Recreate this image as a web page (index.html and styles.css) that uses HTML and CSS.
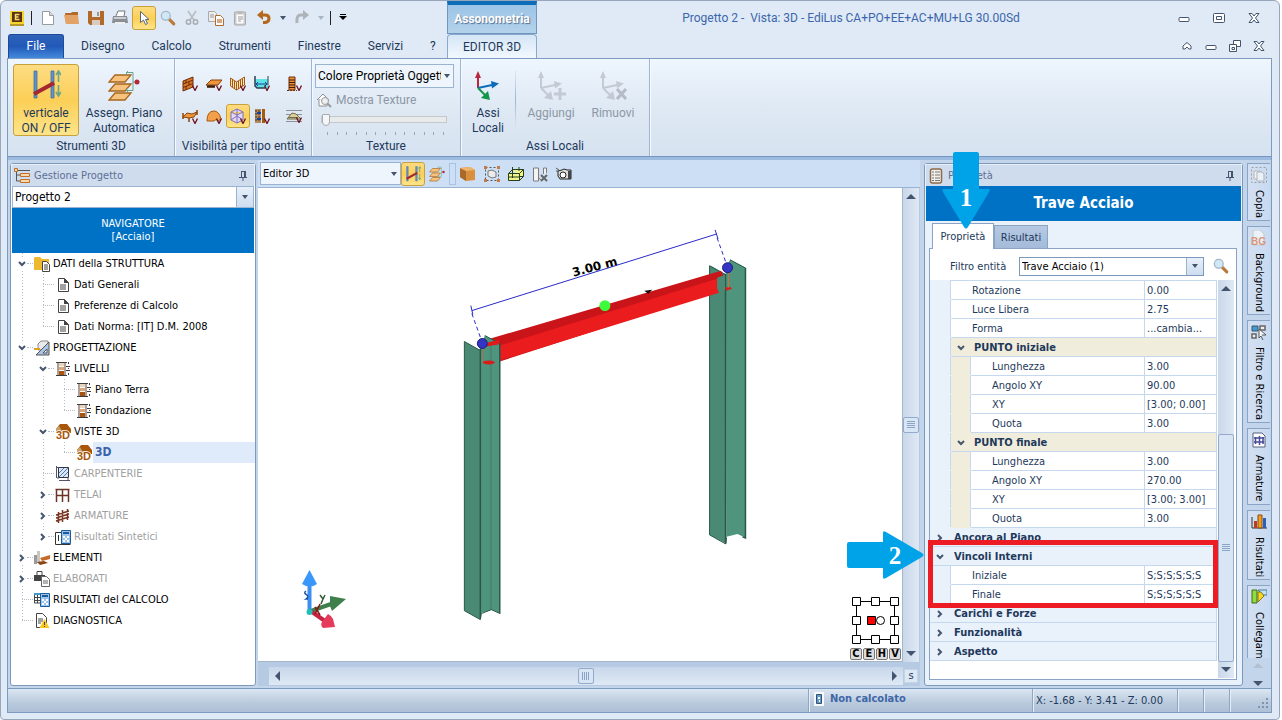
FILE: index.html
```html
<!DOCTYPE html>
<html lang="it">
<head>
  <meta charset="UTF-8">
  <title>Progetto 2 - Vista: 3D - EdiLus</title>
  <link rel="stylesheet" href="styles.css">
</head>
<body>

  <!-- shared icons -->
  <svg class="defs" aria-hidden="true">
    <symbol id="i-doc" viewBox="0 0 16 16"><path d="M3.500 1.500h6l4 4v9h-10z" fill="#fff" stroke="#444"/><path d="M9 1v5h5z" fill="#444"/><path d="M5 8h6M5 10h6M5 12h6" stroke="#444"/></symbol>
    <symbol id="i-down" viewBox="0 0 10 10"><path d="M2 3l3 3 3-3" fill="none" stroke="#45566f" stroke-width="2"/></symbol>
    <symbol id="i-right" viewBox="0 0 10 10"><path d="M3 2l3 3-3 3" fill="none" stroke="#45566f" stroke-width="2"/></symbol>
    <symbol id="i-pin" viewBox="0 0 10 12"><path d="M3 1.500h5M3.500 1v6M6.500 1v6M7.500 1v6M1 7.500h8M5 8v3" fill="none" stroke="#44546e"/></symbol>
    <symbol id="i-v" viewBox="0 0 6 6"><path d="M0.500 0.500l2.500 5 2.500-5" fill="none" stroke="#6d0f1c" stroke-width="1.300"/></symbol>
    <symbol id="i-min" viewBox="0 0 12 12"><rect x="1" y="5.500" width="10" height="4" rx="1" fill="#fff" stroke="#44546e"/></symbol>
    <symbol id="i-x" viewBox="0 0 12 12"><path d="M1 1.500h3l2 2.500 2-2.500h3l-3.500 4.500 3.500 4.500h-3l-2-2.500-2 2.500h-3l3.500-4.500z" fill="#fff" stroke="#44546e"/></symbol>
    <symbol id="i-lens" viewBox="0 0 18 18"><path d="M10.500 10.500l5 5" stroke="#b8793a" stroke-width="3.500" stroke-linecap="round"/><circle cx="6.500" cy="6.500" r="5" fill="#cfe8f8" stroke="#a9b8c6" stroke-width="1.500"/></symbol>
    <symbol id="i-levels" viewBox="0 0 16 16"><path d="M1 1.500h11M1 14.500h11" stroke="#3c3c3c"/><path d="M3 1v13M10 1v13" stroke="#5a4030"/><path d="M4 2h5v3H4z" fill="#e8d5c0"/><path d="M4 6h5v3H4z" fill="#d8a679"/><path d="M4 10h5v4H4z" fill="#a8540c"/><path d="M11 5.500h4M11 9.500h4M13.500 1v2M13.500 7v1M13.500 12v2" stroke="#3c3c3c"/></symbol>
    <symbol id="i-house" viewBox="0 0 16 16"><path d="M1 5l4-5h7l4 5v4H5z" fill="#a8560a"/><path d="M1 5l3-3 3 5v2H1z" fill="#c9a06c"/><text x="1" y="15" font-family="Liberation Sans" font-size="11" font-weight="bold" fill="#a8560a" stroke="#fff" stroke-width="1.500" paint-order="stroke">3D</text></symbol>
    <symbol id="i-planes" viewBox="0 0 32 30"><path d="M7 4h16l-6 7H1zM7 13h16l-6 7H1zM7 22h16l-6 7H1z" fill="#f6c27d" stroke="#a8661c" stroke-width="1.300"/><path d="M18 1.500h7v18h-7M25 11h4M20 0l-2 2 2 2M20 17l-2 2 2 2" fill="none" stroke="#63a58d"/><circle cx="29" cy="11" r="2.500" fill="#b4283c"/></symbol>
    <symbol id="i-vert" viewBox="0 0 30 30"><path d="M3 1h3v27H3zM20 1h3v27h-3z" fill="#5b93cf" stroke="#4d6f94" stroke-width="0.800"/><path d="M3 24L23 13" stroke="#a5272f" stroke-width="4"/><path d="M27.500 2v10M27.500 15v10M25 5l2.500-4L30 5M25 22l2.500 4 2.500-4" fill="none" stroke="#6aa58b" stroke-width="1.600"/></symbol>
    <symbol id="i-axes" viewBox="0 0 32 32"><path d="M6 5v13" stroke="var(--z)" stroke-width="2"/><path d="M3 8l3-7 3 7z" fill="var(--z)"/><path d="M6 18l14-3" stroke="var(--y)" stroke-width="2"/><path d="M19 11l8 2.500-7 5z" fill="var(--y)"/><path d="M6 18l8 8" stroke="var(--x)" stroke-width="2"/><path d="M16 21l2 9-9-2z" fill="var(--x)"/></symbol>
    <symbol id="i-calc" viewBox="0 0 16 16"><path d="M6.500 1.500h9v13h-9z" fill="#9cc4ec" stroke="#1d5c9c"/><path d="M8 3h6v2H8z" fill="#1d5c9c"/><path d="M8 7h2v2H8zM12 7h2v2h-2zM10 9h2v2h-2zM8 11h2v2H8zM12 11h2v2h-2z" fill="#fff"/></symbol>
  </svg>

  <div class="window">

    <header class="top">
      <div class="quick">
        <svg class="ic" viewBox="0 0 16 16"><path d="M1 1h14v13H1z" fill="#f3d52c"/><path d="M3 2h10v10H3z" fill="#5c3214"/><path d="M10.500 4.500h-4v5h4M6.500 7h3" fill="none" stroke="#f5d96b" stroke-width="1.500"/><path d="M1 14h14v2H1z" fill="#b8972a"/></svg>
        <span class="bar"></span>
        <button class="tool" title="Nuovo"><svg class="ic" viewBox="0 0 16 16"><path d="M2.500 1.500h7l4 4v9h-11z" fill="#fff" stroke="#9a9a9a"/><path d="M9.500 1.500v4h4" fill="#ddd" stroke="#9a9a9a"/></svg></button>
        <button class="tool" title="Apri"><svg class="ic" viewBox="0 0 16 16"><path d="M1 3h6l1-1h6v12H2z" fill="#b06a2b"/><path d="M0 5h14l1 9H2z" fill="#e3a266"/></svg></button>
        <button class="tool" title="Salva"><svg class="ic" viewBox="0 0 16 16"><path d="M0 1h16v14H2l-2-2z" fill="#b26a2a"/><path d="M4 1h8v6H4z" fill="#e4e6ea"/><path d="M4 10h8v5H4z" fill="#d9cbbd"/><path d="M9 2h2v4H9z" fill="#999"/></svg></button>
        <button class="tool" title="Stampa"><svg class="ic" viewBox="0 0 16 16"><path d="M4 6l2-5h7l-1 5" fill="#fff" stroke="#777"/><path d="M1 6h14l1 7H0z" fill="#8a8e94"/><path d="M2 7h12v2H2z" fill="#c9ccd0"/><path d="M3 12h10v2H3z" fill="#eee"/></svg></button>
        <button class="tool on" title="Seleziona"><svg class="ic" viewBox="0 0 16 16"><path d="M4.500 1.500v11l3-2.500 2 4.500 2-1-2-4h3.500z" fill="#fff" stroke="#56657f"/></svg></button>
        <button class="tool" title="Zoom"><svg class="ic"><use href="#i-lens"/></svg></button>
        <button class="tool" title="Taglia"><svg class="ic" viewBox="0 0 16 16"><path d="M4 1l6 9M12 1L6 10" stroke="#b9bcc0" stroke-width="1.600"/><circle cx="4.500" cy="12" r="2.200" fill="none" stroke="#a9acb0" stroke-width="1.500"/><circle cx="11.500" cy="12" r="2.200" fill="none" stroke="#a9acb0" stroke-width="1.500"/></svg></button>
        <button class="tool" title="Copia"><svg class="ic" viewBox="0 0 16 16"><path d="M0.500 1.500h6l2 2v8h-8z" fill="#eee" stroke="#aaa"/><path d="M7.500 5.500h5l3 3v7h-8z" fill="#fff" stroke="#b06a2b"/><path d="M2 5h4M2 7h4" stroke="#999"/><path d="M9 10h5M9 12h5" stroke="#c98c55" stroke-width="1.500"/></svg></button>
        <button class="tool" title="Incolla"><svg class="ic" viewBox="0 0 16 16"><rect x="2.500" y="2" width="11" height="13" rx="1" fill="#ccc" stroke="#aaa"/><path d="M4.500 4.500h7v9h-7z" fill="#fff"/><path d="M6 1h4v3H6z" fill="#bbb"/><path d="M6 7h5M6 9h5M6 11h3" stroke="#999"/></svg></button>
        <button class="tool" title="Annulla"><svg class="ic" viewBox="0 0 16 16"><path d="M4 5h5q4 0 4 3.500t-4 4H7" fill="none" stroke="#b5671c" stroke-width="3"/><path d="M7 0v10L1 5z" fill="#b5671c"/></svg></button>
        <span class="tri"></span>
        <button class="tool redo" title="Ripeti"><svg class="ic" viewBox="0 0 16 16"><path d="M12 5H7q-5 0-4 8" fill="none" stroke="#aeb3b9" stroke-width="3"/><path d="M9 0v10l6-5z" fill="#aeb3b9"/></svg></button>
        <span class="tri dim"></span>
        <span class="bar thin"></span>
        <span class="tri custom"></span>
      </div>
      <div class="context">Assonometria</div>
      <div class="caption">
        <span class="title">Progetto 2 -&nbsp; Vista: 3D - EdiLus CA+PO+EE+AC+MU+LG 30.00Sd</span>
        <span class="controls wide">
          <button title="Riduci"><svg><use href="#i-min"/></svg></button>
          <button title="Ingrandisci"><svg viewBox="0 0 12 12"><rect x="0.500" y="1.500" width="11" height="9" rx="1" fill="#fff" stroke="#44546e"/><path d="M3.500 4.500h5v3h-5z" fill="none" stroke="#44546e"/></svg></button>
          <button title="Chiudi"><svg><use href="#i-x"/></svg></button>
        </span>
      </div>
      <nav class="menu">
        <a class="file" href="#">File</a>
        <a href="#">Disegno</a>
        <a href="#">Calcolo</a>
        <a href="#">Strumenti</a>
        <a href="#">Finestre</a>
        <a href="#">Servizi</a>
        <a href="#">?</a>
      </nav>
      <a class="editor" href="#">EDITOR 3D</a>
      <div class="controls doc">
        <button title="Comprimi"><svg viewBox="0 0 12 12"><path d="M2 6l4-3.500L10 6v3H8L6 7 4 9H2z" fill="#fff" stroke="#44546e"/></svg></button>
        <button title="Riduci"><svg><use href="#i-min"/></svg></button>
        <button title="Ripristina"><svg viewBox="0 0 12 12"><path d="M4.500 0.500h7v6h-7z" fill="#fff" stroke="#44546e"/><path d="M0.500 4.500h7v7h-7z" fill="#fff" stroke="#44546e"/><path d="M3 7.500h2.500v2H3z" fill="none" stroke="#44546e"/></svg></button>
        <button title="Chiudi"><svg><use href="#i-x"/></svg></button>
      </div>
    </header>

    <div class="client">

      <section class="ribbon">
        <div class="group g-tools">
          <div class="items">
            <button class="big on"><svg class="ic30"><use href="#i-vert"/></svg>verticale<br>ON / OFF</button>
            <button class="big plan"><svg class="ic32"><use href="#i-planes"/></svg>Assegn. Piano<br>Automatica</button>
          </div>
          <h2>Strumenti 3D</h2>
        </div>
        <div class="group g-vis">
          <div class="items">
            <div class="toggles">
              <button title="Muri"><svg class="ic" viewBox="0 0 16 16"><path d="M1 5l10-4v10L1 15z" fill="#d9772a" stroke="#6e2c08"/><path d="M1 8l10-4M1 11.500L11 7.500M4 4v3.500M7 6v3M4 10v3.500" stroke="#6e2c08"/><use href="#i-v" x="10" y="9" width="6" height="6"/></svg></button>
              <button title="Solai"><svg class="ic" viewBox="0 0 16 16"><path d="M0 9l5-5h11l-4 5z" fill="#f0953c" stroke="#8a4409"/><path d="M1 9l1 3 1-3 1 3 1-3 1 3 1-3 1 3 1-3" fill="none" stroke="#40200a"/><use href="#i-v" x="10" y="9" width="6" height="6"/></svg></button>
              <button title="Ringhiere"><svg class="ic" viewBox="0 0 16 16"><path d="M0.500 2l6 4 8-5v8l-8 5-6-4z" fill="#ffe3b5" stroke="#a55a12"/><path d="M2.500 3v8M4.500 5v8M6.500 6v8M8.500 5v8M10.500 4v7M12.500 3v7" stroke="#a55a12"/><use href="#i-v" x="10" y="9" width="6" height="6"/></svg></button>
              <button title="Vasche"><svg class="ic" viewBox="0 0 16 16"><path d="M1 3h13v9H3l-2-2z" fill="#5fe3e3"/><path d="M1 0v10l2 2h8" fill="none" stroke="#2c3f4f" stroke-width="1.500"/><path d="M14 0v9" stroke="#2c3f4f"/><path d="M2 8h11M4 6L2 8l2 2M11 6l2 2-2 2" fill="none" stroke="#15419a"/><use href="#i-v" x="10" y="9" width="6" height="6"/></svg></button>
              <button title="Piastre"><svg class="ic" viewBox="0 0 16 16"><path d="M1 9l4-4 5 1 5-2-3 5-5 1z" fill="#f0953c" stroke="#8a4409"/><path d="M1 5v6M15 2v5M7 10v4" stroke="#8a4409" stroke-width="1.500"/><use href="#i-v" x="10" y="10" width="6" height="6"/></svg></button>
              <button title="Volte"><svg class="ic" viewBox="0 0 16 16"><path d="M1 13q0-10 7-10 5 0 7 8l-3 2q-2-3-4 0z" fill="#f4a04a" stroke="#a55a12"/><use href="#i-v" x="10" y="10" width="6" height="6"/></svg></button>
              <button class="on" title="Aste"><svg class="ic" viewBox="0 0 16 16"><path d="M7 1l6 3v8l-6 3-6-3V4zM1 4l6 3 6-3M7 1v14M1 12l6-4 6 4" fill="#e2d8f5" stroke="#7a6fc0"/><use href="#i-v" x="10" y="10" width="6" height="6"/></svg></button>
              <button title="Pali"><svg class="ic" viewBox="0 0 16 16"><path d="M1 1h6v14H1z" fill="#b58a62"/><path d="M1 3h6M1 6h6M1 9h6M1 12h6" stroke="#503010" stroke-dasharray="2 1"/><path d="M8 1h3v14H8z" fill="#a55a12"/><path d="M3 5h4M3 11h4" stroke="#15419a" stroke-width="2"/><use href="#i-v" x="10" y="10" width="6" height="6"/></svg></button>
            </div>
            <span class="sep"></span>
            <div class="toggles one">
              <button title="Plinti"><svg class="ic" viewBox="0 0 16 16"><path d="M3 1h6v13H3z" fill="#eb8f3a" stroke="#6e2c08"/><path d="M3 4h6M3 6.500h6M3 9h6M3 11.500h6" stroke="#3d1b08"/><path d="M1 14.500h10" stroke="#6e2c08" stroke-dasharray="2 1"/><use href="#i-v" x="10" y="9" width="6" height="6"/></svg></button>
              <button title="Terreno"><svg class="ic" viewBox="0 0 16 16"><path d="M0 2.500h16M0 6.500h16M0 13.500h16" stroke="#8c9298"/><path d="M1 11l5-6 4 1 5 5z" fill="#dccf9a" stroke="#6f6a4a"/><path d="M2 9.500h10" stroke="#6f6a4a"/><use href="#i-v" x="10" y="9" width="6" height="6"/></svg></button>
            </div>
          </div>
          <h2>Visibilità per tipo entità</h2>
        </div>
        <div class="group g-tex">
          <div class="items stack">
            <div class="combo flat">
              <select aria-label="Colore"><option>Colore Proprietà Oggetto</option></select><span class="arrow"></span>
            </div>
            <button class="show" disabled><svg class="ic" viewBox="0 0 16 16"><path d="M1 8l6-6 6 6M3 7v7h8V7" fill="#fff" stroke="#8c9298"/><circle cx="9" cy="9" r="3.500" fill="#eee" stroke="#9a9a9a"/><path d="M11.500 11.500l3.500 3.500" stroke="#9a9a9a" stroke-width="2"/></svg>Mostra Texture</button>
            <input type="range" min="0" max="12" value="0" aria-label="Trasparenza">
            <div class="ticks"><i></i><i></i><i></i><i></i><i></i><i></i><i></i><i></i><i></i><i></i><i></i><i></i><i></i></div>
          </div>
          <h2>Texture</h2>
        </div>
        <div class="group g-axes">
          <div class="items">
            <button class="big axes"><svg class="ic32 rgb"><use href="#i-axes"/></svg>Assi<br>Locali</button>
            <span class="sep"></span>
            <button class="big add" disabled><svg class="ic32 gray" viewBox="0 0 32 32"><use href="#i-axes"/><path d="M25 18v12M19 24h12" stroke="#c3cad3" stroke-width="3"/></svg>Aggiungi</button>
            <button class="big del" disabled><svg class="ic32 gray" viewBox="0 0 32 32"><use href="#i-axes"/><path d="M20 19l9 10M29 19l-9 10" stroke="#b4bbc5" stroke-width="3"/></svg>Rimuovi</button>
          </div>
          <h2>Assi Locali</h2>
        </div>
      </section>

      <main class="work">

        <aside class="panel project">
          <div class="panel-head">
            <svg class="ic" viewBox="0 0 16 16"><path d="M2.500 3v10h4M2.500 7h4M4 2.500h12" fill="none" stroke="#555"/><path d="M0.500 0.500h3v3h-3zM6.500 5.500h9v3h-9zM6.500 11.500h9v3h-9z" fill="#fbd7ac" stroke="#c0702b"/></svg>
            <h1>Gestione Progetto</h1>
            <svg class="pin"><use href="#i-pin"/></svg>
          </div>
          <div class="combo big-combo">
            <select aria-label="Progetto"><option>Progetto 2</option></select><span class="arrow"></span>
          </div>
          <div class="navigator">NAVIGATORE<br>[Acciaio]</div>
          <ul class="tree">
            <li><div class="node"><svg class="chev"><use href="#i-down"/></svg><svg class="ic" viewBox="0 0 16 16"><path d="M0 2l1-1h5l2 2h7v11H0z" fill="#efb92f"/><path d="M8.500 5.500h4l3 3v7h-7z" fill="#fff" stroke="#444"/><path d="M10 9h4M10 11h4M10 13h4" stroke="#444"/></svg><span>DATI della STRUTTURA</span></div>
              <ul>
                <li><div class="node leaf"><svg class="ic"><use href="#i-doc"/></svg><span>Dati Generali</span></div></li>
                <li><div class="node leaf"><svg class="ic"><use href="#i-doc"/></svg><span>Preferenze di Calcolo</span></div></li>
                <li><div class="node leaf"><svg class="ic"><use href="#i-doc"/></svg><span>Dati Norma: [IT] D.M. 2008</span></div></li>
              </ul>
            </li>
            <li><div class="node"><svg class="chev"><use href="#i-down"/></svg><svg class="ic" viewBox="0 0 16 16"><path d="M4 4l3-3h7v9H4z" fill="#e8eaee" stroke="#888"/><path d="M0 9h6" stroke="#e0a020" stroke-width="2"/><path d="M2 15L15 2v13z" fill="#a8c4e8" stroke="#555"/><path d="M9 13h4V9z" fill="#fff" stroke="#555"/></svg><span>PROGETTAZIONE</span></div>
              <ul>
                <li><div class="node"><svg class="chev"><use href="#i-down"/></svg><svg class="ic"><use href="#i-levels"/></svg><span>LIVELLI</span></div>
                  <ul>
                    <li><div class="node leaf"><svg class="ic"><use href="#i-levels"/></svg><span>Piano Terra</span></div></li>
                    <li><div class="node leaf"><svg class="ic"><use href="#i-levels"/></svg><span>Fondazione</span></div></li>
                  </ul>
                </li>
                <li><div class="node"><svg class="chev"><use href="#i-down"/></svg><svg class="ic"><use href="#i-house"/></svg><span>VISTE 3D</span></div>
                  <ul>
                    <li><div class="node leaf current"><svg class="ic"><use href="#i-house"/></svg><span>3D</span></div></li>
                  </ul>
                </li>
                <li><div class="node leaf off"><svg class="ic" viewBox="0 0 16 16"><path d="M3.500 1.500h10v10h-10z" fill="#dbe6f5" stroke="#334"/><path d="M4 7l5-5M4 11l9-9M8 11l5-5" stroke="#4a7ab8"/><path d="M1.500 0v12M4 14.500h11M2 1.500h2M2 12h2M13 12v3" stroke="#556"/></svg><span>CARPENTERIE</span></div></li>
                <li><div class="node off"><svg class="chev"><use href="#i-right"/></svg><svg class="ic" viewBox="0 0 16 16"><path d="M1.500 15V2M7.500 15V2M13.500 15V2M0.500 2.500h14M1 8.500h13" fill="none" stroke="#6b3426" stroke-width="1.500"/></svg><span>TELAI</span></div></li>
                <li><div class="node off"><svg class="chev"><use href="#i-right"/></svg><svg class="ic" viewBox="0 0 16 16"><path d="M3.500 15V4M7.500 14V2M12.500 12V1M1 7l13-4M1 10l13-4M1 13l13-4" fill="none" stroke="#7a3422" stroke-width="1.500"/></svg><span>ARMATURE</span></div></li>
                <li><div class="node off"><svg class="chev"><use href="#i-right"/></svg><svg class="ic" viewBox="0 0 16 16"><path d="M0.500 3.500h6v12h9M0.500 3.500v12h6M3.500 12V6" fill="none" stroke="#333"/><use href="#i-calc"/></svg><span>Risultati Sintetici</span></div></li>
              </ul>
            </li>
            <li><div class="node"><svg class="chev"><use href="#i-right"/></svg><svg class="ic" viewBox="0 0 16 16"><path d="M0 5h3v9H0z" fill="#9a9a9a"/><path d="M3 1h3v12H3z" fill="#c9c5bf"/><path d="M6 8l10-3v4l-8 2z" fill="#c56a28"/><path d="M3 12l7-1 4 2-8 2z" fill="#8a4516"/></svg><span>ELEMENTI</span></div></li>
            <li><div class="node off"><svg class="chev"><use href="#i-right"/></svg><svg class="ic" viewBox="0 0 16 16"><path d="M3 4V0.500h5V4" fill="#fff" stroke="#444"/><path d="M0 4h11v6H0z" fill="#444"/><path d="M7.500 5.500h5l3 3v7h-8z" fill="#fff" stroke="#666"/><path d="M9 10h5M9 12h5" stroke="#666"/></svg><span>ELABORATI</span></div></li>
            <li><div class="node leaf"><svg class="ic" viewBox="0 0 16 16"><path d="M0 1h10v2H0z" fill="#3d9bd6"/><path d="M0.500 3v8h6M0 5.500h6M0 8.500h6M3.500 3v8" fill="none" stroke="#444"/><use href="#i-calc"/></svg><span>RISULTATI del CALCOLO</span></div></li>
            <li><div class="node leaf"><svg class="ic" viewBox="0 0 16 16"><path d="M2.500 0.500h6l4 4v10h-10z" fill="#fff" stroke="#444"/><path d="M4 6h5M4 8h5M4 10h3" stroke="#444"/><path d="M10.500 6l5 9h-10z" fill="#f8c81c"/><path d="M10.500 9v3M10.500 13v1" stroke="#444"/></svg><span>DIAGNOSTICA</span></div></li>
          </ul>
        </aside>

        <section class="view">
          <div class="view-bar">
            <div class="combo flat">
              <select aria-label="Editor"><option>Editor 3D</option></select><span class="arrow"></span>
            </div>
            <button class="tool on" title="Verticale"><svg class="ic"><use href="#i-vert"/></svg></button>
            <button class="tool" title="Piano"><svg class="ic"><use href="#i-planes"/></svg></button>
            <span class="grip"></span>
            <button class="tool" title="Solido"><svg class="ic" viewBox="0 0 16 16"><path d="M0 2l10-1 5 3v10l-9 1-6-4z" fill="#d98f3c"/><path d="M0 2l6 3v10l-6-4z" fill="#a86a2a"/><path d="M0 2l10-1 5 3-9 1z" fill="#f0b46c"/></svg></button>
            <button class="tool" title="Riquadro"><svg class="ic" viewBox="0 0 16 16"><path d="M1.500 1.500h13v13h-13z" fill="none" stroke="#555" stroke-dasharray="2 2"/><path d="M4 5l4-1 4 2v5l-4 1-4-2z" fill="#ececec" stroke="#777"/><path d="M0 0h3v3H0zM13 0h3v3h-3zM0 13h3v3H0zM13 13h3v3h-3z" fill="#c87a45"/></svg></button>
            <button class="tool" title="Filo"><svg class="ic" viewBox="0 0 16 16"><path d="M0.500 7.500h11v7h-11zM4.500 3.500h11v7h-4" fill="#f4f48c" stroke="#26401c"/><path d="M0.500 7.500l4-4M11.500 7.500l4-4M11.500 14.500l4-4M0 11h12M4.500 1v11M11 1v4" stroke="#26401c"/></svg></button>
            <button class="tool" title="Nascondi"><svg class="ic" viewBox="0 0 16 16"><path d="M1.500 2v13h5V2zM6 11l4 4M11.500 8V2h3v5" fill="#f3f3f3" stroke="#7c7c7c"/><path d="M9 9l6 6M15 9l-6 6" stroke="#666" stroke-width="2"/></svg></button>
            <button class="tool" title="Foto"><svg class="ic" viewBox="0 0 16 16"><path d="M2 5l4-1 2-1 3 1h4v9H4l-2-3z" fill="#ddd" stroke="#222"/><circle cx="7" cy="9" r="3" fill="#fff" stroke="#222"/><path d="M12 5h3v8h-3z" fill="#444"/><path d="M0 2l3 2M0 5h2" stroke="#555"/></svg></button>
          </div>
          <div class="canvas">
            <svg class="scene" viewBox="258 188 645 475">
              <!-- back column -->
              <path d="M710.500 266l3 1 14 8v270l-17-9z" fill="#4a8a75"/>
              <path d="M727 268l4-8 15.500 8v271l-8-4-11 3z" fill="#4f947d"/>
              <path d="M726.500 274v271M746.500 268v271l-3-1" fill="none" stroke="#28584a" stroke-width="1.500"/>
              <path d="M710.500 266v270l16 9 1-6M710.500 266l16 9M731 260l15 8" fill="none" stroke="#28584a"/>
              <!-- beam -->
              <path d="M484 341l238-70 3 6-8 15-217 70-1-18-12 3z" fill="#c9141a"/>
              <path d="M500 346l218-67v10l2 4-220 68z" fill="#ea1c1e"/>
              <path d="M645 291l8-1-4 4z" fill="#111"/>
              <path d="M718 278l8-3v16l-8-2z" fill="#4a8a75"/>
              <path d="M726 288l5-1 2 2-6 2z" fill="#e01b1b"/>
              <path d="M729.500 270v18" stroke="#d86a3c"/>
              <!-- front column -->
              <path d="M464.500 342l16 9v270l-16-9z" fill="#4a8a75"/>
              <path d="M480 350l5-14 15 8v271l-8-4-12 4z" fill="#4f947d"/>
              <path d="M491 347v264" stroke="#468871" stroke-width="2"/>
              <path d="M480.500 349v271M500 344v271" stroke="#28584a" stroke-width="1.500"/>
              <path d="M464.500 342v270l16 9 1-6 10-4 9 4M464.500 342l16 9M485 336l15 8" fill="none" stroke="#28584a"/>
              <path d="M488 343l12-3-1 5-13 2z" fill="#e01b1b"/>
              <ellipse cx="489" cy="363" rx="6" ry="2" fill="#d81b1b"/>
              <path d="M482.500 348v15" stroke="#b86a4c"/>
              <!-- dimension line -->
              <path d="M472 311l246-77M471 306l2 9M716 230l3 9" stroke="#2929c8"/>
              <path d="M472 314l9 25M718 238l9 25" stroke="#2929c8" stroke-dasharray="4 3"/>
              <text x="574" y="277" transform="rotate(-15 574 277)" class="dim">3.00 m</text>
              <circle cx="482.500" cy="344" r="5" fill="#3535c4" stroke="#1c1c80"/>
              <circle cx="728.500" cy="268" r="5" fill="#3535c4" stroke="#1c1c80"/>
              <circle cx="605.500" cy="306" r="5.500" fill="#3dfc3a"/>
            </svg>
            <svg class="triad" viewBox="0 0 50 62">
              <path d="M10.500 14v28" stroke="#3a8ff2" stroke-width="4"/>
              <path d="M3 14L10.500 0 18 14q-7 5-15 0z" fill="#3a97fa"/>
              <path d="M12 41l20-7" stroke="#3f7f4b" stroke-width="4"/>
              <path d="M31 26l16 3-14 12-2-5z" fill="#3f7f4b"/>
              <path d="M13 42l13 9" stroke="#c82343" stroke-width="4"/>
              <path d="M29 44q4 2 5 5l2 8-12 1q-3-3-1-6z" fill="#e63a5c"/>
              <path d="M7 21q-3 2 1 4 2 2-1 4h2" fill="none" stroke="#2054a8" stroke-width="1.500"/>
              <path d="M21 25l3 4 2-4M24 29l-2 5" fill="none" stroke="#355c36" stroke-width="1.500"/>
              <path d="M16 37l5 8M21 34l-5 10" stroke="#8a1515" stroke-width="1.500"/>
              <circle cx="10.500" cy="42" r="3" fill="#23bcb8"/>
            </svg>
            <div class="snap">
              <svg viewBox="0 0 48 48"><path d="M5.500 5.500h38v38h-38z" fill="none" stroke="#000"/><path d="M1.500 1.500h8v8h-8zM20.500 1.500h8v8h-8zM39.500 1.500h8v8h-8zM1.500 20.500h8v8h-8zM39.500 20.500h8v8h-8zM1.500 39.500h8v8h-8zM20.500 39.500h8v8h-8zM39.500 39.500h8v8h-8z" fill="#fff" stroke="#000"/><path d="M16.500 20.500h8v8h-8z" fill="#f00" stroke="#000"/><circle cx="29.500" cy="24.500" r="4" fill="#fff" stroke="#000"/></svg>
              <div class="keys"><button>C</button><button>E</button><button>H</button><button>V</button></div>
            </div>
          </div>
          <div class="vscroll"><span class="up"></span><span class="thumb"><i></i></span><span class="down"></span></div>
          <div class="hscroll"><span class="left"></span><span class="thumb"><i></i></span><span class="right"></span></div>
          <button class="sbtn">s</button>
        </section>

        <aside class="panel props">
          <div class="panel-head">
            <svg class="ic" viewBox="0 0 16 16"><rect x="2.500" y="1" width="11" height="14" rx="2" fill="#f1efe9" stroke="#8a6a48" stroke-width="1.500"/><path d="M4 4h2M7 4h5M4 7h2M7 7h5M4 10h2M7 10h5M4 12.500h2M7 12.500h5" stroke="#777"/></svg>
            <h1>Proprietà</h1>
            <svg class="pin"><use href="#i-pin"/></svg>
          </div>
          <h2 class="entity">Trave Acciaio</h2>
          <div class="tabs"><button class="active">Proprietà</button><button>Risultati</button></div>
          <div class="sheet">
            <div class="filter">
              <label for="entity">Filtro entità</label>
              <div class="combo">
                <select id="entity"><option>Trave Acciaio (1)</option></select><span class="arrow"></span>
              </div>
              <button class="tool" title="Cerca"><svg class="ic"><use href="#i-lens"/></svg></button>
            </div>
            <div class="list">
              <table>
                <colgroup><col class="c1"><col class="c1"><col><col class="c4"></colgroup>
                <tr><td class="in"></td><td class="nm" colspan="2">Rotazione</td><td>0.00</td></tr>
                <tr><td class="in"></td><td class="nm" colspan="2">Luce Libera</td><td>2.75</td></tr>
                <tr><td class="in"></td><td class="nm" colspan="2">Forma</td><td>...cambia...</td></tr>
                <tr><td class="in"></td><th class="sub" colspan="3"><svg class="chev"><use href="#i-down"/></svg>PUNTO iniziale</th></tr>
                <tr><td class="in"></td><td class="in2"></td><td class="nm">Lunghezza</td><td>3.00</td></tr>
                <tr><td class="in"></td><td class="in2"></td><td class="nm">Angolo XY</td><td>90.00</td></tr>
                <tr><td class="in"></td><td class="in2"></td><td class="nm">XY</td><td>[3.00; 0.00]</td></tr>
                <tr><td class="in"></td><td class="in2"></td><td class="nm">Quota</td><td>3.00</td></tr>
                <tr><td class="in"></td><th class="sub" colspan="3"><svg class="chev"><use href="#i-down"/></svg>PUNTO finale</th></tr>
                <tr><td class="in"></td><td class="in2"></td><td class="nm">Lunghezza</td><td>3.00</td></tr>
                <tr><td class="in"></td><td class="in2"></td><td class="nm">Angolo XY</td><td>270.00</td></tr>
                <tr><td class="in"></td><td class="in2"></td><td class="nm">XY</td><td>[3.00; 3.00]</td></tr>
                <tr><td class="in"></td><td class="in2"></td><td class="nm">Quota</td><td>3.00</td></tr>
                <tr><th colspan="4"><svg class="chev"><use href="#i-right"/></svg>Ancora al Piano</th></tr>
                <tr><th colspan="4"><svg class="chev"><use href="#i-down"/></svg>Vincoli Interni</th></tr>
                <tr><td class="in"></td><td class="nm" colspan="2">Iniziale</td><td>S;S;S;S;S;S</td></tr>
                <tr><td class="in"></td><td class="nm" colspan="2">Finale</td><td>S;S;S;S;S;S</td></tr>
                <tr><th colspan="4"><svg class="chev"><use href="#i-right"/></svg>Carichi e Forze</th></tr>
                <tr><th colspan="4"><svg class="chev"><use href="#i-right"/></svg>Funzionalità</th></tr>
                <tr><th colspan="4"><svg class="chev"><use href="#i-right"/></svg>Aspetto</th></tr>
              </table>
              <div class="vscroll"><span class="up"></span><span class="thumb long"><i></i></span><span class="down"></span></div>
            </div>
          </div>

          <!-- tutorial callouts -->
          <svg class="step step1" viewBox="0 0 48 77"><path d="M13 0h22q2 0 2 2v35h9q3 0 1 3L26 75q-2 3-4 0L1 40q-2-3 1-3h9V2q0-2 2-2z" fill="#00a2e8"/><text x="24" y="54" text-anchor="middle">1</text></svg>
          <svg class="step step2" viewBox="0 0 77 48"><path d="M0 13q0-2 2-2h34V2q0-3 3-1l36 21q3 2 0 4L39 47q-3 2-3-1v-9H2q-2 0-2-2z" fill="#00a2e8"/><text x="48" y="33" text-anchor="middle">2</text></svg>
          <div class="mark"></div>
        </aside>

        <nav class="side">
          <button><svg class="ic faded" viewBox="0 0 16 16"><path d="M0.500 0.500h15v15h-15z" fill="none" stroke="#777" stroke-dasharray="2 2"/><path d="M3 4h6v8H3z" fill="#fff" stroke="#b89a7a"/><path d="M6 5h5l2 2v7H6z" fill="#fff" stroke="#999"/></svg>Copia</button>
          <button><svg class="ic faded" viewBox="0 0 16 16"><path d="M2 0h7l4 4v11H2z" fill="#fff" stroke="#bbb"/><text x="0" y="15" font-family="Liberation Sans" font-size="10" font-weight="bold" fill="#e0662e">BG</text></svg>Background</button>
          <button><svg class="ic" viewBox="0 0 16 16"><path d="M1 2h6v5H1z" fill="#3f9bd8" stroke="#456"/><path d="M9 2h5v4H9zM1 10h4v4H1z" fill="#eee" stroke="#666" stroke-width="1.500"/><path d="M8 5v9l2-2 2 4M8 5l7 6h-4" fill="#fff" stroke="#555"/></svg>Filtro e Ricerca</button>
          <button><svg class="ic" viewBox="0 0 16 16"><path d="M2 1h9l3 3v11H2z" fill="#fff" stroke="#55617c"/><path d="M4.500 5v7M8.500 4v9M12 5v7M3 6h10M3 10h10" stroke="#4a4a9a" stroke-width="1.500"/></svg>Armature</button>
          <button><svg class="ic" viewBox="0 0 16 16"><path d="M1 3v11h15" fill="none" stroke="#333"/><path d="M3 7h3v7H3z" fill="#c03a1c"/><path d="M7 1h4v13H7z" fill="#f0a020" stroke="#8a4a10"/><path d="M12 4h3v10h-3z" fill="#2c5fb8"/></svg>Risultati</button>
          <button class="cut"><svg class="ic" viewBox="0 0 16 16"><path d="M1 1h5v13H1z" fill="#8fdc3c" stroke="#3c6a1c"/><path d="M7 1h9v5h-4z" fill="#bfe4f6" stroke="#4a7a9a"/><path d="M7 3v10l6-6-3-4z" fill="#f6d72a" stroke="#8a7a10"/></svg>Collegam</button>
          <span class="up dim"></span>
          <span class="down"></span>
        </nav>
      </main>

      <footer class="status">
        <div class="calc"><svg viewBox="0 0 10 14"><path d="M0 0h10v14H0z" fill="#f6f9fc"/><path d="M2.500 2.500h5v9h-5z" fill="#5a9ad0" stroke="#3a5068"/><path d="M4 5h2v2H4zM5 8h1v2H5z" fill="#fff"/></svg><b>Non calcolato</b></div>
        <div class="coords">X: -1.68 - Y: 3.41 - Z: 0.00</div>
        <div class="cell"></div>
        <div class="cell"></div>
        <div class="cell last"><svg viewBox="0 0 12 12"><path d="M9 0h2v2H9zM5 4h2v2H5zM9 4h2v2H9zM1 8h2v2H1zM5 8h2v2H5zM9 8h2v2H9z" fill="#7f93af"/></svg></div>
      </footer>
    </div>
  </div>
</body>
</html>
```
FILE: styles.css
```css
* {
  box-sizing: border-box;
}
body {
  margin: 0;
  background: #fff;
  color: #1e395b;
  font-family: "DejaVu Sans Condensed", "DejaVu Sans", sans-serif;
  font-size: 11px;
}
h1, h2, ul {
  margin: 0;
  padding: 0;
  font-size: 12px;
  font-weight: normal;
}
button, select, input {
  font: inherit;
  color: inherit;
  margin: 0;
}
button {
  padding: 0;
  border: 1px solid transparent;
  background: none;
}
a {
  color: inherit;
  text-decoration: none;
}
svg {
  display: block;
  flex: none;
  writing-mode: horizontal-tb;
}
.defs {
  position: absolute;
  width: 0;
  height: 0;
}
.ic {
  width: 16px;
  height: 16px;
}
.ic30 {
  width: 30px;
  height: 30px;
}
.ic32 {
  width: 32px;
  height: 32px;
}
.window {
  display: flex;
  flex-direction: column;
  min-height: 100vh;
  margin-right: 2px;
  padding-bottom: 6px;
  border: 1px solid #97a6ba;
  border-radius: 6px 6px 4px 4px;
  background: #dfeaf6;
}

/* title and menu */
.top {
  display: grid;
  grid-template-columns: 446px 90px 1fr;
  grid-template-rows: 33px 24px;
  font-family: Roboto, sans-serif;
  font-size: 12px;
}
.quick {
  display: flex;
  align-items: center;
  padding-left: 8px;
}
.tool {
  display: flex;
  align-items: center;
  justify-content: center;
  width: 24px;
  height: 24px;
}
.on {
  border: 1px solid #c9a13b;
  border-radius: 3px;
  background: linear-gradient(#fddc82, #fbcf57 50%, #fde48a);
}
.bar {
  width: 1px;
  height: 14px;
  margin: 0 4px 0 6px;
  background: #222;
}
.bar.thin {
  margin: 0 4px 0 2px;
}
.tri, .arrow::before {
  width: 0;
  border: 3px solid transparent;
  border-top: 4px solid #44546e;
  border-bottom: 0;
}
.tri {
  margin: 0 4px;
}
.tri.dim {
  border-top-color: #a9b5c5;
}
.tri.custom {
  position: relative;
  border-width: 4px 4px 0;
  border-top-color: #000;
}
.tri.custom::before {
  content: "";
  position: absolute;
  left: -3px;
  top: -6px;
  width: 6px;
  height: 1px;
  background: #000;
}
.context {
  display: flex;
  align-items: center;
  justify-content: center;
  border: 1px solid #6f97c0;
  border-top: 4px solid #0d6cb8;
  background: linear-gradient(#9cc4e6, #b4d2ea);
  color: #fff;
  font-weight: bold;
  text-shadow: 1px 1px 1px #4e6f94;
}
.caption {
  display: flex;
  align-items: center;
  justify-content: space-between;
  padding-right: 9px;
  color: #3c66ab;
}
.title {
  flex: 1;
  text-align: center;
}
.controls {
  display: flex;
  justify-content: flex-end;
  align-items: center;
  gap: 10px;
}
.controls svg {
  width: 12px;
  height: 12px;
}
.controls.wide {
  gap: 21px;
  padding: 0 9px 0 12px;
}
.controls.doc {
  padding-right: 13px;
}
.menu {
  display: flex;
  align-items: center;
  padding-left: 7px;
}
.menu a {
  margin-left: 27px;
}
.menu .file {
  width: 56px;
  height: 24px;
  margin: 0 -10px 0 0;
  border: 1px solid #1c4b9c;
  border-bottom: 0;
  border-radius: 3px 3px 0 0;
  background: linear-gradient(#2f63b8, #2159b8 50%, #4389dd);
  color: #fff;
  line-height: 23px;
  text-align: center;
}
.editor {
  display: flex;
  align-items: center;
  justify-content: center;
  border: 1px solid #8ba9cc;
  border-bottom: 0;
  border-radius: 4px 4px 0 0;
  background: linear-gradient(#d5e6f6, #f2f8fe);
}

.client {
  display: flex;
  flex-direction: column;
  flex: 1;
  margin: 0 7px 0 6px;
  border: 1px solid #7d9bc1;
  background: #c3d5eb;
}

/* ribbon */
.ribbon {
  display: flex;
  height: 98px;
  border-bottom: 1px solid #7397c2;
  background: linear-gradient(#eef6fe, #dfe9f4 50%, #d6e2f0);
  font-family: Roboto, sans-serif;
  font-size: 12px;
}
.group {
  display: flex;
  flex-direction: column;
  border-right: 1px solid #9fb5d2;
  box-shadow: 1px 0 #f5faff;
}
.group h2 {
  line-height: 20px;
  text-align: center;
}
.items {
  display: flex;
  flex: 1;
  padding: 5px 5px 0;
}
.g-tools {
  width: 167px;
}
.g-vis {
  width: 137px;
}
.g-tex {
  width: 149px;
}
.g-axes {
  width: 189px;
}
.big {
  display: flex;
  flex-direction: column;
  align-items: center;
  width: 66px;
  height: 72px;
  padding-top: 5px;
  line-height: 15px;
}
.big .ic30 {
  margin-bottom: 6px;
}
.big .ic32 {
  margin-bottom: 4px;
}
.big.plan {
  width: 90px;
}
.big.axes {
  width: 44px;
}
.big.add, .big.del {
  width: 62px;
}
.big:disabled, .show:disabled {
  color: #8d97a5;
}
.rgb {
  --z: #b8283a;
  --y: #0b6cba;
  --x: #12964a;
}
.gray {
  --z: #c3cad3;
  --y: #c3cad3;
  --x: #c3cad3;
}
.toggles {
  display: grid;
  grid-template-columns: repeat(4, 24px);
  grid-auto-rows: 24px;
  gap: 8px 0;
  padding-top: 8px;
}
.toggles.one {
  grid-template-columns: 24px;
}
.toggles button {
  display: flex;
  align-items: center;
  justify-content: center;
}
.g-vis .items {
  padding-left: 3px;
}
.sep {
  width: 1px;
  margin: 6px 4px;
  background: linear-gradient(#dfe9f4, #9fb5d2 50%, #dfe9f4);
}
.g-axes .sep {
  margin-left: 5px;
}
.items.stack {
  flex-direction: column;
  padding: 5px 6px 0 3px;
}
.show {
  display: flex;
  align-items: center;
  gap: 4px;
  height: 24px;
}
input[type=range] {
  width: 126px;
  height: 14px;
  margin-left: 6px;
  appearance: none;
  background: none;
}
input[type=range]::-webkit-slider-runnable-track {
  height: 7px;
  border: 1px solid #c3c8cd;
  background: #e9ebea;
}
input[type=range]::-webkit-slider-thumb {
  width: 8px;
  height: 12px;
  margin-top: -3px;
  appearance: none;
  border: 1px solid #a8acb1;
  border-radius: 1px 1px 4px 4px;
  background: #f5f6f7;
}
.ticks {
  display: flex;
  justify-content: space-between;
  margin: 6px 10px 0 12px;
}
.ticks i {
  width: 1px;
  height: 3px;
  background: #9aa7b8;
}

/* combos */
.combo {
  display: flex;
  border: 1px solid #9ab3d3;
  background: #fff;
  color: #000;
}
.combo select {
  flex: 1;
  min-width: 0;
  padding: 0 0 0 2px;
  border: 0;
  appearance: none;
  background: none;
  overflow: hidden;
}
.arrow {
  display: flex;
  align-items: center;
  justify-content: center;
  width: 17px;
  border-left: 1px solid #9ab3d3;
  background: linear-gradient(#e7f0fa, #cddcef);
}
.arrow::before {
  content: "";
}
.flat {
  height: 24px;
  background: #eef5fd;
}
.flat .arrow {
  width: 12px;
  border: 0;
  background: none;
}

/* work area */
.work {
  display: flex;
  flex: 1;
  padding: 3px 0 2px 2px;
  border-top: 3px solid #9dbbdf;
}
.panel {
  display: flex;
  flex-direction: column;
  position: relative;
  border: 1px solid #7f99ba;
  border-radius: 3px;
  background: #fff;
}
.panel-head {
  display: flex;
  align-items: center;
  gap: 4px;
  height: 22px;
  padding: 0 6px 0 2px;
  border: 1px solid #e6effa;
  border-bottom: 0;
  background: #cfdced;
  color: #5d6f96;
}
.panel-head h1 {
  flex: 1;
  font-size: 11px;
}
.pin {
  width: 10px;
  height: 12px;
}
.project {
  width: 246px;
}
.big-combo {
  height: 22px;
  margin: 0 1px;
  border-color: #9ab3d3;
  font-size: 12px;
}
.navigator {
  margin: 0 1px;
  padding: 9px 0 10px;
  background: #0072c6;
  color: #fff;
  line-height: 13px;
  text-align: center;
}
.tree, .tree ul {
  list-style: none;
  background: repeating-linear-gradient(#b5bcc6 0 1px, transparent 1px 3px) 11px 0 / 1px calc(100% - 11px) no-repeat;
  font-size: 11px;
}
.tree {
  padding-left: 0;
  color: #000;
}
.tree ul {
  margin-left: 21px;
}
.node {
  display: flex;
  align-items: center;
  height: 21px;
  padding-left: 6px;
}
.node::before {
  content: "";
  order: 1;
  width: 6px;
  margin-right: 1px;
  border-top: 1px dotted #b5bcc6;
}
.node.leaf::before {
  width: 11px;
  margin-left: 5px;
}
.node .chev {
  background: #fff;
}
.node .ic, .node span {
  order: 2;
}
.node span {
  flex: 1;
  margin-left: 1px;
  padding-left: 2px;
  line-height: 21px;
}
.chev {
  width: 10px;
  height: 10px;
}
.off span {
  color: #a0a0a0;
}
.current span {
  background: #dfebfa;
  color: #3a62a8;
  font-weight: bold;
  font-size: 12px;
}

/* 3D view */
.view {
  display: grid;
  flex: 1;
  grid-template-columns: 1fr 17px;
  grid-template-rows: 28px 1fr 24px;
  margin: -3px 4px 0 2px;
  background: #b7cae4;
}
.view-bar {
  display: flex;
  align-items: center;
  grid-column: span 2;
  padding-left: 2px;
  border-bottom: 1px solid #9ab3d3;
  background: #cddff5;
}
.view-bar .combo {
  width: 141px;
  height: 23px;
}
.grip {
  width: 7px;
  height: 22px;
  border: 1px solid #a9c1e2;
}
.canvas {
  position: relative;
  min-height: 440px;
  background: #fff;
  border-right: 1px solid #a5b5ca;
  border-bottom: 1px solid #a5b5ca;
}
.scene {
  position: absolute;
  width: 100%;
  height: 100%;
}
.dim {
  font: bold 12px "DejaVu Sans", sans-serif;
}
.triad {
  position: absolute;
  left: 41px;
  bottom: 29px;
  width: 50px;
  height: 62px;
}
.snap {
  position: absolute;
  right: 1px;
  bottom: 1px;
}
.snap svg {
  width: 48px;
  height: 48px;
  margin: 0 0 4px 1px;
}
.keys {
  display: flex;
  gap: 1px;
}
.keys button {
  width: 12px;
  height: 12px;
  border: 1px solid #777;
  border-radius: 2px;
  background: #ddd;
  color: #000;
  font-weight: bold;
  line-height: 10px;
}
.vscroll, .hscroll {
  display: flex;
  justify-content: space-between;
  align-items: center;
}
.vscroll {
  flex-direction: column;
  width: 16px;
  padding: 6px 0;
  background: linear-gradient(90deg, #c8d7ea, #dfe9f5);
}
.hscroll {
  height: 18px;
  margin: 5px 0 0 11px;
  padding: 0 6px;
  background: linear-gradient(#c8d7ea, #dfe9f5);
}
.up, .down, .left, .right {
  width: 0;
  border: 5px solid transparent;
}
.up {
  border-top: 0;
  border-bottom-color: #44546e;
}
.up.dim {
  border-bottom-color: #b4c0d0;
}
.down {
  border-bottom: 0;
  border-top-color: #44546e;
}
.left {
  border-left: 0;
  border-right-color: #44546e;
}
.right {
  border-right: 0;
  border-left-color: #44546e;
}
.thumb {
  display: flex;
  align-items: center;
  justify-content: center;
  width: 16px;
  height: 16px;
  border: 1px solid #93aacb;
  border-radius: 2px;
  background: #d8e5f4;
}
.thumb i {
  width: 8px;
  height: 8px;
  background: repeating-linear-gradient(#8ba3c5 0 1px, transparent 1px 2px);
}
.hscroll .thumb i {
  background: repeating-linear-gradient(90deg, #8ba3c5 0 1px, transparent 1px 2px);
}
.sbtn {
  width: 14px;
  height: 14px;
  margin: 7px 0 0 1px;
  border: 1px solid #c5d3e6;
  background: #dde8f5;
  line-height: 10px;
}

/* properties */
.props {
  width: 319px;
  background: #e9f1fb;
}
.entity {
  margin: 0 1px;
  background: #0072c6;
  color: #fff;
  font-size: 15px;
  font-weight: bold;
  line-height: 35px;
  text-align: center;
}
.tabs {
  display: flex;
  align-items: flex-end;
  height: 27px;
  padding-left: 7px;
}
.tabs button {
  width: 54px;
  height: 23px;
  border: 1px solid #8ba3c5;
  border-bottom: 0;
  background: linear-gradient(#b6c9e2, #a3bbd9);
}
.tabs .active {
  position: relative;
  width: 62px;
  height: 26px;
  margin-bottom: -1px;
  background: #fff;
}
.sheet {
  flex: 1;
  display: flex;
  flex-direction: column;
  margin: 0 5px 5px 4px;
  border: 1px solid #8ba3c5;
  background: #fff;
}
.filter {
  display: flex;
  align-items: center;
  padding: 7px 3px 4px 20px;
}
.filter label {
  width: 69px;
}
.filter .combo {
  width: 185px;
  height: 19px;
  border-color: #7f99ba;
}
.filter .tool {
  height: 20px;
  margin-left: 5px;
}
.list {
  display: flex;
  flex: 1;
  padding: 0 2px 1px 0;
}
.list table {
  flex: 1;
  align-self: flex-start;
  border-collapse: collapse;
  table-layout: fixed;
  border-top: 1px solid #c5d8ee;
  border-left: 1px solid #c5d8ee;
}
.list .vscroll {
  margin-left: 1px;
}
.list td, .list th {
  height: 19px;
  padding: 0 0 0 2px;
  border: 1px solid #c5d8ee;
  white-space: nowrap;
  line-height: 17px;
}
.list th {
  padding-left: 4px;
  border-left-color: #e9f1fb;
  background: #e9f1fb;
  text-align: left;
}
.list th .chev {
  display: inline-block;
  margin-right: 9px;
  vertical-align: middle;
}
.list .nm {
  padding-left: 21px;
}
.list .in {
  border-color: #e9f1fb #c5d8ee #e9f1fb #e9f1fb;
  background: #e9f1fb;
}
.list .in2 {
  border-color: #f1eddc #c5d8ee #f1eddc #c5d8ee;
  background: #f1eddc;
}
.list .sub {
  padding-left: 5px;
  background: #f1eddc;
}
.list .sub .chev {
  margin-right: 8px;
}
.c1 {
  width: 20px;
}
.c4 {
  width: 72px;
}
.vscroll .long {
  height: 228px;
  margin: auto 0 5px;
}

/* callouts */
.step {
  position: absolute;
}
.step text {
  fill: #fff;
  font: bold 25px "Liberation Serif", serif;
}
.step1 {
  left: 17px;
  top: -12px;
  width: 48px;
  height: 77px;
}
.step2 {
  left: -78px;
  top: 367px;
  width: 77px;
  height: 48px;
}
.mark {
  position: absolute;
  left: 3px;
  top: 376px;
  width: 290px;
  height: 68px;
  border: 5px solid #ed1c24;
}

/* side tabs */
.side {
  display: flex;
  flex-direction: column;
  align-items: center;
  gap: 5px;
  width: 28px;
  padding-left: 2px;
  color: #000;
}
.side button {
  display: flex;
  align-items: center;
  gap: 7px;
  padding: 3px 3px 2px;
  border: 1px solid #8ba3c5;
  border-right: 0;
  background: linear-gradient(90deg, #d3e0f2, #c8daf0);
  font-size: 11px;
  line-height: 16px;
  writing-mode: vertical-rl;
}
.side .cut {
  padding-bottom: 0;
  border-bottom: 0;
}
.side .down {
  margin-top: 8px;
}
.faded {
  opacity: 0.6;
}

/* status bar */
.status {
  display: flex;
  justify-content: flex-end;
  height: 24px;
  border-top: 1px solid #7d9bc1;
  background: linear-gradient(#dbe6f2, #b9cadd 60%, #adc0d6);
}
.status > div {
  display: flex;
  align-items: center;
  border-left: 1px solid #8fa5c2;
  box-shadow: inset 1px 0 #e6eef8;
}
.status .calc {
  width: 224px;
  gap: 6px;
  padding: 0 0 4px 5px;
  color: #3f66a6;
}
.calc svg {
  width: 10px;
  height: 14px;
}
.coords {
  width: 145px;
  padding-left: 3px;
}
.cell {
  width: 26px;
}
.status .last {
  width: 42px;
  justify-content: flex-end;
  align-items: flex-end;
  padding: 0 2px 2px 0;
}
.last svg {
  width: 12px;
  height: 12px;
}
```
